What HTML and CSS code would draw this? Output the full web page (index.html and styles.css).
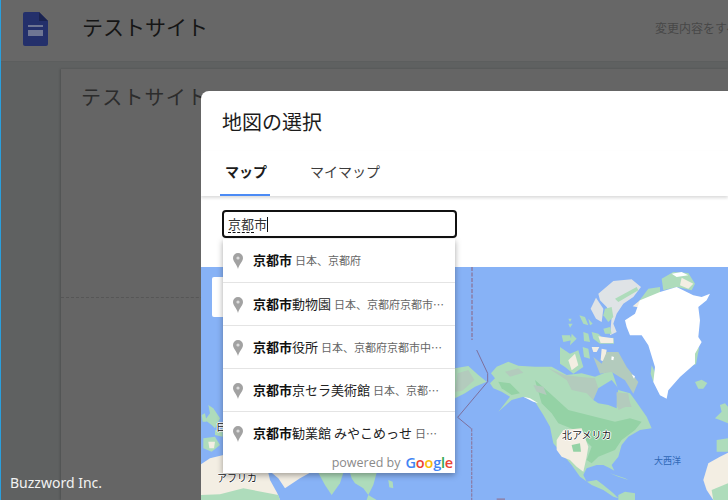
FILE: index.html
```html
<!DOCTYPE html>
<html lang="ja">
<head>
<meta charset="utf-8">
<title>地図の選択</title>
<link rel="stylesheet" href="styles.css">
</head>
<body>
<div class="app">
  <header class="topbar">
    <svg class="site-icon" viewBox="0 0 25 34" aria-hidden="true">
      <path class="doc" d="M2 0H16L25 9V32a2 2 0 0 1-2 2H2a2 2 0 0 1-2-2V2a2 2 0 0 1 2-2Z"/>
      <path class="fold" d="M16 0L25 9H16Z"/>
      <path class="glyph" d="M5 13H20V15H5ZM5 18H20V24H5Z"/>
    </svg>
    <div class="site-name">テストサイト</div>
    <div class="save-note">変更内容をすべて保存しました</div>
  </header>
  <main class="canvas">
    <section class="page-card">
      <h1 class="page-title">テストサイト</h1>
      <div class="page-rule"></div>
    </section>
  </main>
</div>

<div class="dialog">
  <h2 class="dialog-title">地図の選択</h2>
  <nav class="tabs">
    <div class="tab tab-active">マップ</div>
    <div class="tab">マイマップ</div>
  </nav>
  <div class="search-row">
    <div class="search-box"><span class="ime">京都</span>市<span class="caret"></span></div>
  </div>
  <div class="map">
    <svg class="map-art" viewBox="201 267 527 233" aria-hidden="true">
      <!-- Europe-side and Asia strip -->
      <g transform="translate(200 400) scale(.3333)">
        <polygon class="sand" points="0,195 30,175 70,165 70,218 205,218 210,240 232,280 240,300 0,300"/>
        <polygon class="sand" points="215,218 330,218 300,235 255,265 235,235"/>
        <polygon class="land" points="0,285 60,283 130,265 235,285 240,300 0,300"/>
        <polygon class="land" points="355,218 430,218 420,250 395,285 375,255"/>
        <polygon class="land" points="450,218 530,218 520,255 505,285 490,265 465,250 455,235"/>
        <polygon class="land" points="505,285 530,300 500,300"/>
        <polygon class="land" points="565,240 578,245 580,265 568,262"/>
        <polygon class="land" points="25,15 40,25 60,55 45,85 35,75 15,60 30,40"/>
        <polygon class="land" points="5,45 15,40 20,65 8,65"/>
        <polygon class="land" points="45,90 68,95 68,110 45,105"/>
        <polygon class="land" points="10,115 45,110 60,135 35,155 10,145"/>
        <polygon class="sand" points="25,125 45,125 42,145 28,145"/>
      </g>
      <!-- North America -->
      <g transform="translate(455 350) scale(.3333)">
        <polygon class="land" points="0,55 40,48 70,75 95,95 60,110 30,130 0,145"/>
        <polygon class="land-grey" points="8,70 40,60 58,90 22,122 0,125"/>
        <polygon class="land" points="105,100 120,85 108,70 125,50 160,35 190,47 240,50 290,50 335,75 380,70 420,80 470,60 490,120 525,130 540,150 575,200 590,235 555,240 520,260 500,285 490,320 470,345 478,362 465,355 445,345 425,345 395,355 385,375 395,395 425,390 445,405 475,430 490,445 475,440 445,420 410,405 375,380 350,345 320,310 295,280 285,230 265,195 240,155 205,140 170,150 130,185 150,160 165,140 140,125 115,115"/>
        <polygon class="land-dark" points="240,90 285,130 340,180 420,200 480,215 525,205 560,215 540,240 500,270 480,300 430,320 410,340 395,330 410,290 360,240 310,220 290,190 260,160"/>
        <polygon class="land-dark" points="130,95 165,100 195,130 170,135 140,115"/>
        <polygon class="land-grey" points="280,55 330,75 370,80 420,85 430,115 415,150 395,130 350,120 335,90"/>
        <polygon class="land-grey" points="150,65 190,55 205,68 165,80"/>
        <polygon class="land-grey" points="235,105 265,110 275,135 245,125"/>
        <polygon class="water" points="415,150 430,115 470,90 490,115 485,175 460,165 430,160"/>
        <polygon class="land-grey" points="485,130 520,130 525,165 490,180"/>
        <polygon class="sand" points="305,270 325,240 380,235 400,290 395,320 385,365 365,350 345,330 320,320 305,300"/>
        <polygon class="land-dark" points="350,285 375,280 378,305 355,305"/>
        <polygon class="white" points="205,140 225,145 250,160 235,155"/>
        <polygon class="water" points="330,330 352,362 342,362 322,332"/>
        <polygon class="land" points="465,370 510,385 520,390 490,380"/>
        <polygon class="land" points="490,435 510,425 540,430 540,450 490,450"/>
        <polyline class="dateline" points="65,0 98,70 98,95 8,202 48,235"/>
        <polyline class="dashed" points="50,235 50,450"/>
        <rect class="hawaii" x="125" y="445" width="25" height="5"/>
      </g>
      <polyline class="dashed" points="472,267 472,340"/>
      <!-- Arctic and Greenland -->
      <g transform="translate(560 267) scale(.3333)">
        <polygon class="ice" points="115,80 160,42 215,37 243,60 220,90 190,110 170,140 160,170 170,195 150,205 155,150 140,120 120,100"/>
        <polygon class="land" points="165,95 230,60 235,70 175,105"/>
        <polygon class="ice" points="92,125 108,92 130,125 125,165 108,155"/>
        <polygon class="land" points="135,125 155,120 160,150 145,165 130,145"/>
        <polygon class="land" points="58,145 75,150 85,175 70,170"/>
        <polygon class="land" points="85,155 98,170 90,175"/>
        <polygon class="land" points="130,185 150,180 155,200 135,200"/>
        <polygon class="land" points="5,205 30,205 35,220 10,225"/>
        <polygon class="land" points="35,200 50,215 30,235"/>
        <polygon class="land" points="70,195 85,200 90,225 72,222"/>
        <polygon class="land" points="25,155 35,155 30,165"/>
        <polygon class="land" points="25,170 38,170 30,182"/>
        <polygon class="land" points="95,195 115,200 130,215 160,212 162,230 120,230 100,215"/>
        <polygon class="sand" points="115,208 160,214 160,228 122,228"/>
        <polygon class="land" points="0,240 30,260 55,250 70,300 40,320 15,300 0,290"/>
        <polygon class="sand" points="25,280 45,260 55,295 35,310"/>
        <polygon class="land" points="68,240 85,245 90,275 72,270"/>
        <polygon class="sand" points="95,240 118,240 110,255 100,255"/>
        <polygon class="sand" points="125,245 140,248 135,285 122,280"/>
        <polygon class="land-grey" points="100,270 125,290 140,255 175,255 200,300 235,345 220,380 195,340 155,315 120,320"/>
        <polygon class="white" points="155,268 162,270 160,280 154,278"/>
        <polygon class="white" points="215,322 225,328 222,335"/>
        <polygon class="land-grey" points="170,375 200,380 215,420 170,420"/>
        <polygon class="land" points="305,35 340,15 385,18 405,50 395,70 350,60 310,70"/>
        <polygon class="sand" points="365,32 400,50 385,65 360,55"/>
        <polygon class="white" points="335,20 365,15 385,25 350,30"/>
        <polygon class="land" points="235,105 265,65 300,60 300,80"/>
        <polygon class="sand" points="218,118 240,100 240,122"/>
        <polygon class="land" points="275,295 292,330 280,345 272,320"/>
        <polygon class="land" points="395,260 418,240 408,292 385,298"/>
        <polygon class="land" points="405,345 425,338 442,348 430,365 415,365"/>
        <polygon class="white" points="195,160 225,140 240,100 300,75 350,60 400,85 425,90 450,80 440,100 415,120 420,160 415,210 425,225 405,260 405,290 360,330 325,370 320,395 300,385 280,345 285,300 265,235 245,205 210,205 200,180"/>
      </g>
      <!-- Eastern edge -->
      <g transform="translate(450 260) scale(.3333)">
        <polygon class="land" points="810,435 825,430 834,440 834,490 810,480 795,475 815,455"/>
        <polygon class="land" points="800,540 834,535 834,575 800,575"/>
        <polygon class="sand" points="760,660 775,610 810,590 834,578 834,720 790,720 770,690"/>
        <polygon class="land" points="785,690 834,670 834,720 790,720"/>
      </g>
    </svg>
    <div class="map-control"></div>
    <span class="label label-clip">日本</span>
    <span class="label label-africa">アフリカ</span>
    <span class="label label-na">北アメリカ</span>
    <span class="label-sea">大西洋</span>
  </div>
</div>

<div class="suggest">
  <div class="item"><svg class="pin" viewBox="0 0 10 16" aria-hidden="true"><path class="pin-shape" d="M5 0a5 5 0 0 1 5 5C10 8.5 6.2 11 5 16 3.8 11 0 8.5 0 5a5 5 0 0 1 5-5Z"/><circle class="pin-hole" cx="5" cy="5" r="1.6"/></svg><b>京都市</b><span class="sub">日本、京都府</span></div>
  <div class="item"><svg class="pin" viewBox="0 0 10 16" aria-hidden="true"><path class="pin-shape" d="M5 0a5 5 0 0 1 5 5C10 8.5 6.2 11 5 16 3.8 11 0 8.5 0 5a5 5 0 0 1 5-5Z"/><circle class="pin-hole" cx="5" cy="5" r="1.6"/></svg><b>京都市</b><span class="main">動物園</span><span class="sub">日本、京都府京都市左京区</span></div>
  <div class="item"><svg class="pin" viewBox="0 0 10 16" aria-hidden="true"><path class="pin-shape" d="M5 0a5 5 0 0 1 5 5C10 8.5 6.2 11 5 16 3.8 11 0 8.5 0 5a5 5 0 0 1 5-5Z"/><circle class="pin-hole" cx="5" cy="5" r="1.6"/></svg><b>京都市</b><span class="main">役所</span><span class="sub">日本、京都府京都市中京区寺町</span></div>
  <div class="item"><svg class="pin" viewBox="0 0 10 16" aria-hidden="true"><path class="pin-shape" d="M5 0a5 5 0 0 1 5 5C10 8.5 6.2 11 5 16 3.8 11 0 8.5 0 5a5 5 0 0 1 5-5Z"/><circle class="pin-hole" cx="5" cy="5" r="1.6"/></svg><b>京都市</b><span class="main">京セラ美術館</span><span class="sub">日本、京都府京都市</span></div>
  <div class="item"><svg class="pin" viewBox="0 0 10 16" aria-hidden="true"><path class="pin-shape" d="M5 0a5 5 0 0 1 5 5C10 8.5 6.2 11 5 16 3.8 11 0 8.5 0 5a5 5 0 0 1 5-5Z"/><circle class="pin-hole" cx="5" cy="5" r="1.6"/></svg><b>京都市</b><span class="main">勧業館 みやこめっせ</span><span class="sub">日本、京都府京都市</span></div>
  <div class="powered">powered by<span class="google"><i class="g-b">G</i><i class="g-r">o</i><i class="g-y">o</i><i class="g-b">g</i><i class="g-g">l</i><i class="g-r">e</i></span></div>
</div>

<div class="brand">Buzzword Inc.</div>
</body>
</html>
```

FILE: styles.css
```css
* { box-sizing: border-box; }
html, body { margin: 0; height: 100%; }
body {
  width: 728px;
  height: 500px;
  overflow: hidden;
  position: relative;
  background: #5f6161;
  font-family: "Noto Sans CJK JP", "Noto Sans", sans-serif;
}
.app {
  height: 500px;
  display: flex;
  flex-direction: column;
  border-left: 1px solid #2a9fdc;
}
.topbar {
  height: 62px;
  flex: none;
  display: flex;
  align-items: center;
  background: #676767;
  border-bottom: 1px solid #5c5e5e;
  padding-left: 22px;
  white-space: nowrap;
  overflow: hidden;
}
.site-icon { width: 25px; height: 34px; margin-top: -3px; flex: none; }
.doc { fill: #24306b; }
.fold { fill: #1a2350; }
.glyph { fill: #6f7693; }
.site-name {
  margin-left: 34px;
  width: 573px;
  flex: none;
  font-size: 21px;
  color: #151515;
  margin-top: -9px;
}
.save-note { font-size: 12px; color: #474747; margin-top: -6px; flex: none; }
.canvas {
  flex: 1;
  padding: 7px 0 0 60px;
  display: flex;
  min-height: 0;
}
.page-card {
  flex: 1;
  background: #656565;
  box-shadow: -1px 0 2px rgba(0, 0, 0, .18);
}
.page-title {
  margin: 13px 0 0 20px;
  height: 30px;
  font-size: 20px;
  line-height: 30px;
  font-weight: 400;
  letter-spacing: 1.2px;
  color: #2c2c2c;
}
.page-rule {
  margin-top: 185px;
  border-top: 1px dashed #565656;
}
.dialog {
  position: absolute;
  left: 201px;
  top: 91px;
  width: 527px;
  height: 409px;
  background: #fff;
  border-top-left-radius: 8px;
  display: flex;
  flex-direction: column;
  overflow: hidden;
}
.dialog-title {
  margin: 0;
  height: 60px;
  padding: 16px 0 0 21px;
  font-size: 20px;
  line-height: 30px;
  font-weight: 400;
  color: #1c1c1c;
  flex: none;
}
.tabs {
  height: 45px;
  flex: none;
  display: flex;
  padding-left: 19px;
  gap: 35px;
  box-shadow: 0 2px 3px rgba(0, 0, 0, .14);
  position: relative;
}
.tab {
  padding: 9px 5px 0;
  font-size: 14px;
  line-height: 22px;
  color: #3c3c3c;
  width: 79px;
  white-space: nowrap;
}
.tab-active {
  width: 50px;
  font-weight: 700;
  color: #1c1c1c;
  border-bottom: 2px solid #4c8bf5;
}
.search-row {
  height: 71px;
  flex: none;
  padding: 14px 0 0 21px;
}
.search-box {
  width: 235px;
  height: 28px;
  border: 2px solid #111;
  border-radius: 4px;
  padding-left: 4px;
  font-size: 13px;
  line-height: 24px;
  color: #333;
  display: flex;
  align-items: center;
}
.ime { border-bottom: 1px dashed #111; line-height: 16px; }
.caret { width: 1px; height: 15px; background: #111; }
.map {
  flex: 1;
  position: relative;
  background: #87b2f6;
  overflow: hidden;
}
.map-art { display: block; width: 527px; height: 233px; filter: blur(.4px); }
.sand { fill: #f3eee3; }
.land { fill: #aedcbb; }
.land-dark { fill: #94d2a5; }
.land-grey { fill: #b3cbbd; }
.ice { fill: #dfe3e6; }
.white { fill: #fff; }
.water { fill: #87b2f6; }
.hawaii { fill: #8d86b0; }
.dateline { fill: none; stroke: #7d6f9c; stroke-width: 3; }
.dashed { fill: none; stroke: #8a80ac; stroke-width: 1.6; stroke-dasharray: 4 1.5; }
g .dashed { stroke-width: 4; stroke-dasharray: 10 3; }
.map-control {
  position: absolute;
  left: 11px;
  top: 10px;
  width: 40px;
  height: 40px;
  background: #fff;
  border-radius: 2px;
}
.label, .label-sea { position: absolute; font-size: 10px; line-height: 14px; white-space: nowrap; }
.label {
  color: #222;
  text-shadow: -1px 0 #fff, 1px 0 #fff, 0 -1px #fff, 0 1px #fff;
}
.label-clip { left: 15px; top: 153px; }
.label-africa { left: 16px; top: 204px; }
.label-na { left: 361px; top: 161px; }
.label-sea { left: 453px; top: 187px; color: #2f67b5; font-size: 9px; }
.suggest {
  position: absolute;
  left: 223px;
  top: 239px;
  width: 232px;
  height: 234px;
  background: #fff;
  box-shadow: 0 2px 6px rgba(0, 0, 0, .35);
  display: flex;
  flex-direction: column;
}
.item {
  height: 43px;
  flex: none;
  padding: 0 8px 0 10px;
  border-top: 1px solid #e4e4e4;
  white-space: nowrap;
  overflow: hidden;
  text-overflow: ellipsis;
  line-height: 42px;
  font-size: 11px;
  color: #666;
}
.item:first-child { border-top: 0; }
.pin { width: 10px; height: 16px; margin: -3px 10px 0 0; vertical-align: middle; }
.pin-shape { fill: #a2a2a2; }
.pin-hole { fill: #dcdcdc; }
.item b { font-size: 13px; font-weight: 700; color: #111; }
.main { font-size: 13px; color: #222; }
.sub { margin-left: 3px; }
.powered {
  flex: 1;
  display: flex;
  justify-content: flex-end;
  align-items: center;
  padding: 0 2px 2px 0;
  font: 12.5px/18px "Open Sans", sans-serif;
  color: #8a8a8a;
  white-space: nowrap;
}
.google { font: 600 14.5px/18px "Open Sans", sans-serif; margin-left: 5px; letter-spacing: -.2px; }
.google i { font-style: normal; }
.g-b { color: #4285f4; }
.g-r { color: #ea4335; }
.g-y { color: #fbbc05; }
.g-g { color: #34a853; }
.brand {
  position: absolute;
  left: 10px;
  top: 473px;
  font: 14px/20px "Noto Sans", sans-serif;
  color: #f2f2f2;
}
```
